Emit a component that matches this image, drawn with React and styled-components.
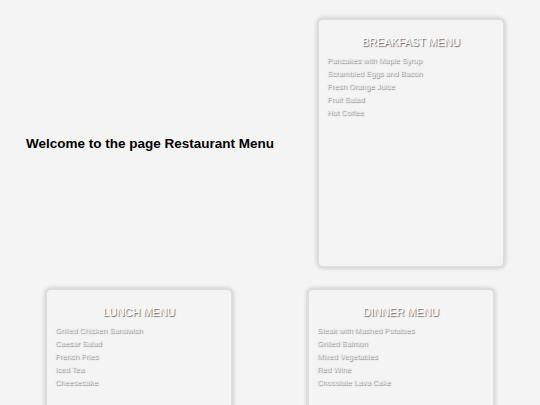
import React from "react";
import styled, { createGlobalStyle } from "styled-components";

const GlobalStyle = createGlobalStyle`
html, body {
  background: #f4f4f4;
}
body {
  margin: 8px;
  font-family: "Liberation Sans", Arial, sans-serif;
}
`

const Page = styled.div`
display: grid;
grid-template-columns: repeat(2, minmax(0, 1fr));
`

const Heading = styled.h1`
align-self: center;
margin: 0 0 0 18px;
font-size: 13.5px;
font-weight: bold;
white-space: nowrap;
color: #000;
`

const Card = styled.div`
justify-self: center;
box-sizing: border-box;
width: 188px;
height: 250px;
margin: 10px 0 10px ${p => p.$shift || 0}px;
padding: 16px 8px;
background: #f4f4f4;
border: 2px solid #dddddd;
border-radius: 6px;
box-shadow: 0 0 4px rgba(0, 0, 0, 0.2);
`

const Title = styled.h2`
margin: 0 0 6px;
text-align: center;
font-size: 10.8px;
font-weight: normal;
line-height: 12px;
text-transform: uppercase;
color: #ffffff;
text-shadow: 1px 1px 1px rgba(0, 0, 0, 0.6);
`

const List = styled.ul`
list-style: none;
margin: 0;
padding: 0;
`

const Item = styled.li`
font-size: 7.7px;
line-height: 13px;
color: #f0f0f0;
text-shadow: 1px 1px 1px rgba(0, 0, 0, 0.5);
`

const menus = {
  breakfast: ["Pancakes with Maple Syrup", "Scrambled Eggs and Bacon", "Fresh Orange Juice", "Fruit Salad", "Hot Coffee"],
  lunch: ["Grilled Chicken Sandwich", "Caesar Salad", "French Fries", "Iced Tea", "Cheesecake"],
  dinner: ["Steak with Mashed Potatoes", "Grilled Salmon", "Mixed Vegetables", "Red Wine", "Chocolate Lava Cake"],
}

const MenuCard = ({ title, items, shift }) => (
  <Card $shift={shift}>
    <Title>{title}</Title>
    <List>
      {items.map(item => <Item key={item}>{item}</Item>)}
    </List>
  </Card>
)

const App = () => {
  return (
    <>
      <GlobalStyle />
      <Page>
        <Heading>Welcome to the page Restaurant Menu</Heading>
        <MenuCard title="Breakfast Menu" items={menus.breakfast} shift={20} />
        <MenuCard title="Lunch Menu" items={menus.lunch} />
        <MenuCard title="Dinner Menu" items={menus.dinner} />
      </Page>
    </>
  )
}

export default App
